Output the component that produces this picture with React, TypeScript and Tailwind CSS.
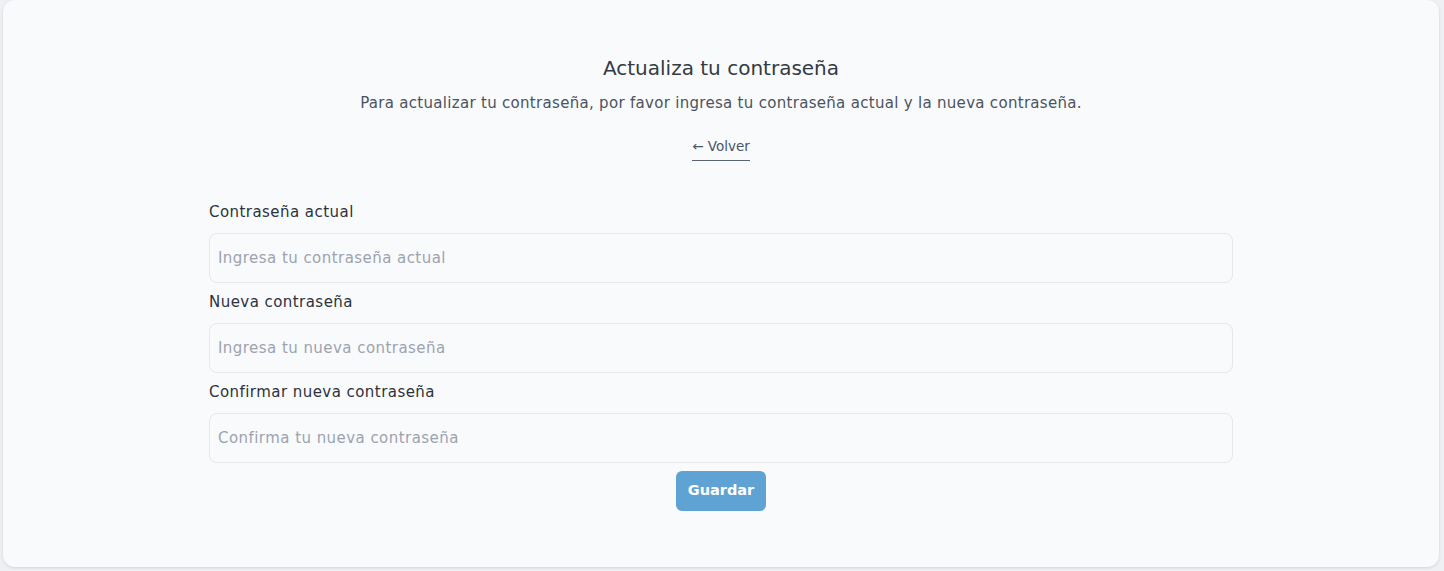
const FONT = "font-['DejaVu_Sans',sans-serif]"

const FIELDS = [
  { label: 'Contraseña actual', placeholder: 'Ingresa tu contraseña actual' },
  { label: 'Nueva contraseña', placeholder: 'Ingresa tu nueva contraseña' },
  { label: 'Confirmar nueva contraseña', placeholder: 'Confirma tu nueva contraseña' },
]

export default function App() {
  return (
    <div className={`h-[571px] bg-[#eef0f3] pl-[3px] pr-[5px] pb-[4px] ${FONT}`}>
      <div className="flex h-full flex-col items-center rounded-xl bg-[#f9fafc] shadow-[0_1px_3px_rgb(0_0_0/0.12)]">
        <h1 className="mt-[55px] text-[20px] font-medium leading-[26px] text-[#333a42]">Actualiza tu contraseña</h1>
        <p className="mt-[12px] text-[15px] leading-[20px] tracking-[0.3px] text-[#4b5360]">
          Para actualizar tu contraseña, por favor ingresa tu contraseña actual y la nueva contraseña.
        </p>
        <a href="#" className="mt-[24px] border-b border-[#5b6472] pb-[5px] text-[13.5px] leading-[18px] text-[#4b5563]">
          ← Volver
        </a>

        <form className="mt-[41px] flex w-[1024px] flex-col" onSubmit={e => e.preventDefault()}>
          {FIELDS.map(f => (
            <div key={f.label} className="flex flex-col">
              <label className="text-[15px] font-medium leading-[20px] tracking-[0.45px] text-[#2d333b]">{f.label}</label>
              <input
                type="password"
                placeholder={f.placeholder}
                className="mt-[11px] mb-[9px] h-[50px] rounded-lg border border-[#e5e7eb] bg-[#f9fafc] px-[8px] text-[15px] tracking-[0.45px] text-[#374151] outline-none placeholder:text-[#9ca3af]"
              />
            </div>
          ))}
          <button
            type="submit"
            className="-mt-[1px] self-center h-[40px] w-[90px] rounded-md bg-[#5ea3d3] text-[14.5px] font-semibold text-white"
          >
            Guardar
          </button>
        </form>
      </div>
    </div>
  )
}
